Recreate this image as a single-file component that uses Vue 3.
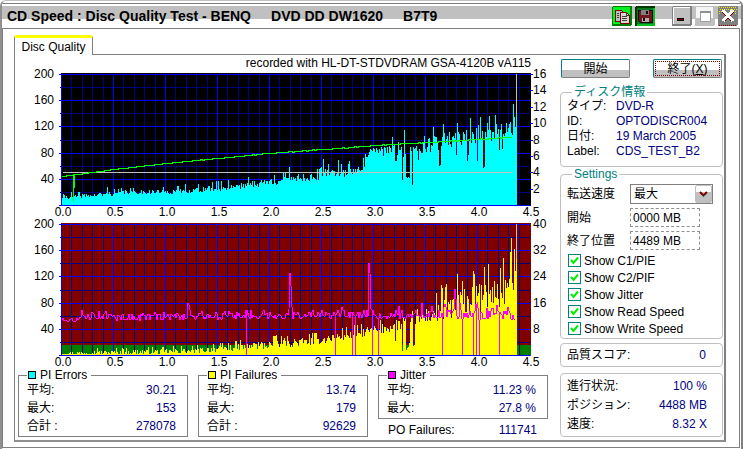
<script setup>
import { ref } from 'vue'

const LEFT = 43
const BASE = 136
const LAST = 498

// Repeatable noise so that the traces look the same on every load.
function noise(seed) {
  let s = seed
  return () => {
    s = (s * 1664525 + 1013904223) % 4294967296
    return s / 4294967296
  }
}

function interpolate(points, x) {
  for (let i = 1; i < points.length; i++) {
    const [x1, y1] = points[i]
    const [x0, y0] = points[i - 1]
    if (x <= x1) return y0 + ((y1 - y0) * (x - x0)) / (x1 - x0)
  }
  return points[points.length - 1][1]
}

function bars(envelope, spread, marks, seed) {
  const next = noise(seed)
  const heights = []
  for (let x = LEFT + 1; x <= LAST; x++) {
    const r = next()
    const shape = r > 0.92 ? 1.1 : r - 0.3
    heights.push(interpolate(envelope, x) + interpolate(spread, x) * shape)
  }
  for (const [x, h] of marks) heights[x - LEFT - 1] = h
  return heights
    .map((h, i) => `M${LEFT + 1 + i} ${BASE}v${-Math.max(1, Math.round(h))}h1v${Math.max(1, Math.round(h))}z`)
    .join('')
}

const errorBars = bars(
  [[44, 7], [60, 8], [79, 9], [107, 12], [147, 12], [179, 14], [212, 17], [245, 21], [271, 24], [274, 26], [300, 26], [307, 31], [330, 31], [346, 37], [349, 50], [380, 54], [410, 57], [430, 62], [450, 66], [470, 69], [492, 73], [498, 80]],
  [[44, 4], [125, 5], [230, 8], [320, 9], [348, 9], [375, 14], [430, 19], [498, 18]],
  [
    [53, 13], [89, 18], [167, 21], [210, 25], [256, 30], [271, 38], [305, 46], [320, 45], [331, 44],
    [377, 44], [378, 44], [384, 25], [385, 48], [386, 75], [388, 28], [389, 27], [390, 28], [391, 27],
    [394, 20], [400, 45], [406, 69], [421, 39], [422, 40], [438, 50], [440, 73], [439, 82], [449, 44], [450, 50],
    [459, 44], [465, 37], [466, 38], [460, 80], [469, 82], [474, 73], [478, 81], [481, 55], [484, 56], [488, 82], [495, 101], [496, 88], [497, 78], [498, 92]
  ],
  41
)

const failureBars = bars(
  [[44, 1], [120, 2], [175, 3], [200, 5], [225, 7], [255, 9], [272, 10], [305, 14], [339, 20], [372, 26], [390, 30], [405, 35], [425, 40], [440, 46], [460, 51], [475, 54], [490, 62], [498, 72]],
  [[44, 4], [200, 6], [260, 9], [300, 8], [360, 10], [400, 12], [430, 28], [498, 36]],
  [
    [79, 7], [105, 6], [163, 9], [195, 11], [210, 12], [236, 12], [258, 20], [266, 17],
    [377, 14], [378, 35], [384, 4], [385, 38], [388, 5], [389, 7], [390, 8], [391, 12], [395, 9], [396, 10],
    [423, 70], [427, 68], [439, 81], [444, 74], [456, 81], [470, 91], [482, 87], [493, 117], [494, 72], [496, 106], [497, 84], [498, 97]
  ],
  97
)

const jitterLine = (() => {
  const next = noise(18)
  const level = [[44, 101], [62, 101], [65, 98], [84, 97], [96, 99], [170, 98], [230, 97], [350, 97], [430, 96], [498, 97]]
  const marks = {
    64: 91, 170: 84, 171: 86, 172: 91, 245: 92, 271: 90, 272: 54, 273: 67, 274: 88, 324: 88, 351: 44, 352: 54, 353: 90,
    381: 87, 404: 84, 414: 87, 427: 85, 437: 70, 438: 80, 442: 84, 458: 85, 459: 83, 460: 89, 479: 86, 490: 88
  }
  const drops = [228, 317, 334, 337, 354, 360, 424, 444, 455, 458, 461, 481]
  let d = ''
  for (let x = LEFT + 1; x <= 497; x++) {
    const amp = x < 62 ? 3 : x > 410 ? 11 : 8
    const r = next()
    const y = marks[x] ?? Math.round(interpolate(level, x) + (r > 0.93 ? -0.7 : 0.4 - r) * amp)
    d += `${d ? 'L' : 'M'}${x} ${y}`
    if (drops.includes(x)) d += `L${x} ${BASE}L${x + 1} ${y}`
  }
  return d
})()

const speedLine = (() => {
  const curve = [[44, 107], [95, 100], [147, 94], [199, 89], [251, 84], [304, 80], [357, 76], [408, 73], [459, 70], [494, 68]]
  const next = noise(7)
  let d = 'M44 107'
  for (let x = 46; x <= 494; x += 2) {
    const y = Math.round(interpolate(curve, x) + (x > 180 ? (next() - 0.5) * 0.8 : 0))
    d += `H${x}V${y}`
  }
  return d
})()

const columns = Array.from({ length: 45 }, (_, i) => ({ x: Math.round(LEFT + i * 10.4), major: i % 5 === 0 }))
const rows = Array.from({ length: 11 }, (_, i) => ({ y: Math.round(5 + i * 13.1), major: i % 2 === 0 }))
const leftLabels = [200, 160, 120, 80, 40].map((v, i) => ({ v, y: Math.round(5 + i * 26.2) }))
const bottomLabels = Array.from({ length: 10 }, (_, i) => ({ v: (i / 2).toFixed(1), x: 45 + i * 52 }))
const scale = (values, step) => values.map((v, i) => ({ v, y: Math.round(5 + i * step) }))

const charts = [
  { id: 'errors', name: 'PI Errors', right: scale([16, 14, 12, 10, 8, 6, 4, 2], 16.4) },
  { id: 'failures', name: 'PI Failures', right: scale([40, 32, 24, 16, 8], 26.2) }
]

const stats = [
  { name: 'PI Errors', color: 'cyan', rows: [['平均:', '30.21'], ['最大:', '153'], ['合計 :', '278078']] },
  { name: 'PI Failures', color: 'yellow', rows: [['平均:', '13.74'], ['最大:', '179'], ['合計 :', '92629']] },
  { name: 'Jitter', color: 'magenta', rows: [['平均:', '11.23 %'], ['最大:', '27.8 %']] }
]

const discInfo = [['タイプ:', 'DVD-R'], ['ID:', 'OPTODISCR004'], ['日付:', '19 March 2005'], ['Label:', 'CDS_TEST_B2']]
const progress = [['進行状況:', '100 %'], ['ポジション:', '4488 MB'], ['速度:', '8.32 X']]

const speed = ref('最大')
const start = ref('0000 MB')
const end = ref('4489 MB')
const options = ref([
  { label: 'Show C1/PIE', on: true },
  { label: 'Show C2/PIF', on: true },
  { label: 'Show Jitter', on: true },
  { label: 'Show Read Speed', on: true },
  { label: 'Show Write Speed', on: true }
])
</script>

<template>
  <div class="window">
    <header class="titlebar">
      <h1 class="title"><span>CD Speed : Disc Quality Test - BENQ</span><span>DVD DD DW1620</span><span>B7T9</span></h1>
      <div class="tools">
        <button class="tool" aria-label="Copy">
          <svg viewBox="0 0 20 20" shape-rendering="crispEdges">
            <rect width="20" height="20" rx="2" fill="#008000" /><rect x="1" y="1" width="17" height="17" fill="#00f020" />
            <path d="M3 4h6l2 2v9H3z" fill="#c0c0c0" stroke="#800000" />
            <path d="M8 6h6l3 3v8H8z" fill="#d8d8d8" stroke="#800000" />
            <path d="M14 6v3h3M10 10h5M10 12h5M10 14h5M5 7h2M5 9h2M5 11h2" fill="none" stroke="#404040" />
          </svg>
        </button>
        <button class="tool" aria-label="Save">
          <svg viewBox="0 0 20 20" shape-rendering="crispEdges">
            <rect width="20" height="20" rx="2" fill="#003800" /><path d="M2 18h16V2h2v18H2z" fill="#00c020" />
            <rect x="2" y="2" width="16" height="16" fill="#087820" />
            <path d="M3 4h14v12H5l-2-2z" fill="#701820" stroke="#180808" />
            <path d="M6 4h8v5H6z" fill="#808080" /><path d="M7 12h7v4H7z" fill="#b0b0b0" /><path d="M8 12h2v3H8zM11 5h2v3h-2z" fill="#200000" />
          </svg>
        </button>
      </div>
      <div class="controls">
        <button class="tool" aria-label="Minimize">
          <svg viewBox="0 0 20 20" shape-rendering="crispEdges">
            <rect width="20" height="20" rx="2" fill="#808080" /><path d="M1 1h17v17H1z" fill="#c0c0c0" /><path d="M1 1h17v1H2v16H1z" fill="#fff" />
            <path d="M5 12h7v3H5z" fill="#000" /><path d="M6 13h5v1H6z" fill="#800000" />
          </svg>
        </button>
        <button class="tool" aria-label="Maximize">
          <svg viewBox="0 0 20 20" shape-rendering="crispEdges">
            <rect width="20" height="20" rx="2" fill="#c0c0c0" /><path d="M1 1h17v11H1z" fill="#f4f4f4" />
            <path d="M5 5h10v10H5z" fill="#fff" stroke="#a0a0a0" /><path d="M5 5h10v2H5z" fill="#909090" />
          </svg>
        </button>
        <button class="tool" aria-label="Close">
          <svg viewBox="0 0 20 20" shape-rendering="crispEdges">
            <rect width="20" height="20" rx="2" fill="#808080" />
            <path d="M1 1.500h18M2 3.500h17M1 5.500h4M15 5.500h4M1 7.500h2M17 7.500h2" stroke="#f0e800" stroke-dasharray="1 1" />
            <path d="M1 19.500h18" stroke="#800000" stroke-dasharray="1 1" />
            <path d="M5 5l10 10M15 5L5 15" stroke="#800000" stroke-width="4" /><path d="M5 4l10 11M15 4L5 15" stroke="#fff" stroke-width="3" />
          </svg>
        </button>
      </div>
    </header>

    <main class="client">
      <div class="tabs" role="tablist"><button class="tab" role="tab" aria-selected="true">Disc Quality</button></div>
      <section class="panel">
        <div class="left">
          <p class="caption">recorded with HL-DT-STDVDRAM GSA-4120B vA115</p>
          <svg v-for="chart in charts" :key="chart.id" class="chart" viewBox="0 0 530 150" role="img" :aria-label="chart.name">
            <g shape-rendering="crispEdges">
              <rect x="43" y="4" width="470" height="133" :class="'plot-' + chart.id" />
              <rect v-if="chart.id === 'failures'" x="43" y="126" width="470" height="11" fill="#008000" />
              <g v-for="major in [false, true]" :key="String(major)" :class="major ? 'major' : 'minor'">
                <template v-for="c in columns" :key="c.x"><rect v-if="c.major === major" :x="c.x" y="5" width="1" height="132" /></template>
                <template v-for="r in rows" :key="r.y"><rect v-if="r.major === major" :x="major ? 41 : 42" :y="r.y" :width="major ? 471 : 470" height="1" /></template>
              </g>
              <template v-if="chart.id === 'errors'"><rect v-for="r in chart.right" :key="r.v" x="512" :y="r.y" width="3" height="1" class="major" /></template>
              <path :d="chart.id === 'errors' ? errorBars : failureBars" :class="'bars-' + chart.id" />
              <template v-if="chart.id === 'errors'">
                <rect x="45" y="103" width="450" height="1" class="marker" />
                <rect x="498" y="5" width="1" height="40" class="marker" />
                <path :d="speedLine" class="line speed" />
                <rect x="56" y="105" width="1" height="14" class="dip" />
                <rect x="55" y="105" width="1" height="28" class="dip" />
              </template>
              <template v-else>
                <rect x="498" y="5" width="1" height="35" class="marker" />
                <path :d="jitterLine" class="line jitter" />
              </template>
            </g>
            <text v-for="l in leftLabels" :key="l.v" x="36" :y="l.y + 4" text-anchor="end">{{ l.v }}</text>
            <text v-for="l in chart.right" :key="l.v" x="515" :y="l.y + 4">{{ l.v }}</text>
            <text v-for="l in bottomLabels" :key="l.v" :x="l.x" y="147" text-anchor="middle">{{ l.v }}</text>
          </svg>
          <div class="stats">
            <div v-for="s in stats" :key="s.name" class="stat">
              <fieldset class="box">
                <legend><i class="swatch" :class="s.color"></i>{{ s.name }}</legend>
                <dl><div v-for="r in s.rows" :key="r[0]"><dt>{{ r[0] }}</dt><dd>{{ r[1] }}</dd></div></dl>
              </fieldset>
              <dl v-if="s.name === 'Jitter'" class="po"><div><dt>PO Failures:</dt><dd>111741</dd></div></dl>
            </div>
          </div>
        </div>

        <aside class="right">
          <div class="actions">
            <button class="action">開始</button>
            <button class="action focus">終了(<u>X</u>)</button>
          </div>
          <fieldset class="group info">
            <legend>ディスク情報</legend>
            <dl><div v-for="r in discInfo" :key="r[0]"><dt>{{ r[0] }}</dt><dd>{{ r[1] }}</dd></div></dl>
          </fieldset>
          <fieldset class="group settings">
            <legend>Settings</legend>
            <div class="fields">
              <label for="speed">転送速度</label>
              <div class="select">
                <select id="speed" v-model="speed"><option>最大</option></select>
                <span class="arrow"><svg viewBox="0 0 9 6"><path d="M1 1l3.500 3.500L8 1" fill="none" stroke="#800000" stroke-width="2" /><path d="M3 4l1.500 1.500L6 4" fill="none" stroke="#008080" /></svg></span>
              </div>
              <label for="start">開始</label><input id="start" v-model="start" class="text" type="text" />
              <label for="end">終了位置</label><input id="end" v-model="end" class="text" type="text" />
            </div>
            <div class="checks">
              <label v-for="o in options" :key="o.label" class="check">
                <input v-model="o.on" type="checkbox" />
                <svg class="tick" viewBox="0 0 13 13"><rect x="0.500" y="0.500" width="12" height="12" fill="#fff" stroke="#008080" /><path v-if="o.on" d="M3 6l2.500 3L10 3.500" fill="none" stroke="#00f000" stroke-width="2" /></svg>
                {{ o.label }}
              </label>
            </div>
          </fieldset>
          <dl class="group score"><div><dt>品質スコア:</dt><dd>0</dd></div></dl>
          <dl class="group progress"><div v-for="r in progress" :key="r[0]"><dt>{{ r[0] }}</dt><dd>{{ r[1] }}</dd></div></dl>
        </aside>
      </section>
    </main>
  </div>
</template>

<style>
body {
  margin: 0;
  background: #fff;
}
</style>

<style scoped>
* {
  box-sizing: border-box;
}
.window,
button,
input,
select {
  font-family: 'Liberation Sans', 'Noto Sans CJK JP', sans-serif;
  font-size: 12px;
  color: #000;
}
.window {
  display: flex;
  flex-direction: column;
  min-height: 100vh;
  border: 1px solid #c0c0c0;
  border-left: 2px solid #909090;
  border-right: 2px solid #808080;
  border-bottom: 1px solid #808080;
  border-radius: 6px 6px 0 0;
  background: #fff;
  line-height: 14px;
}
.titlebar {
  display: flex;
  align-items: center;
  gap: 22px;
  height: 27px;
  padding: 3px 3px 0 5px;
  background: linear-gradient(#fff 2px, #808080 2px 3px, #fff 3px 5px, #c0c0c0 5px 18px, #fff 18px);
  border-radius: 5px 5px 0 0;
}
.title {
  display: flex;
  flex: 1;
  gap: 20px;
  margin: 0;
  font-size: 14px;
  font-weight: bold;
  white-space: nowrap;
}
.tools,
.controls {
  display: flex;
  gap: 3px;
}
.tools {
  margin-right: -5px;
}
.tool {
  width: 20px;
  height: 20px;
  padding: 0;
  border: 0;
  background: none;
}
.tool svg {
  display: block;
}
.client {
  flex: 1;
  display: flex;
  flex-direction: column;
  margin: 0 1px 1px 0;
  padding: 6px 13px 5px 11px;
  border: 1px solid #808080;
}
.tabs {
  display: flex;
  height: 19px;
}
.tab {
  position: relative;
  width: 79px;
  height: 20px;
  padding: 0;
  border: 1px solid #808080;
  border-top: 3px solid #ff0;
  border-bottom: 0;
  border-radius: 3px 3px 0 0;
  background: #fff;
}
.panel {
  flex: 1;
  display: grid;
  grid-template-columns: minmax(0, 1fr) 163px;
  gap: 12px;
  padding: 3px 1px 3px 3px;
  border: 1px solid #808080;
  border-right-width: 2px;
  border-bottom: 2px solid #909090;
}
.caption {
  margin: 0;
  padding-right: 17px;
  line-height: 11px;
  text-align: right;
}
.chart {
  display: block;
  width: 100%;
  height: auto;
  overflow: visible;
}
.chart text {
  font-size: 12px;
}
.plot-errors {
  fill: #000;
}
.plot-failures {
  fill: #800000;
}
.minor {
  fill: #000080;
}
.major {
  fill: #00f;
}
.bars-errors {
  fill: #0ff;
}
.bars-failures {
  fill: #ff0;
}
.marker {
  fill: #c0c0c0;
}
.dip {
  fill: #0f0;
}
.line {
  fill: none;
}
.speed {
  stroke: #0f0;
}
.jitter {
  stroke: #f0f;
}
.stats {
  display: grid;
  grid-template-columns: repeat(3, 1fr);
  gap: 10px;
}
fieldset {
  min-width: 0;
  margin: 0;
  padding: 0;
}
.box {
  border: 1px solid #808080;
  padding: 0 11px 1px 8px;
}
.box legend {
  display: flex;
  align-items: center;
  gap: 4px;
  padding: 0 4px 0 1px;
  line-height: 12px;
}
.swatch {
  width: 8px;
  height: 8px;
  border: 1px solid #000;
}
.cyan {
  background: #0ff;
}
.yellow {
  background: #ff0;
}
.magenta {
  background: #f0f;
}
dl {
  margin: 0;
}
dl > div {
  display: flex;
  justify-content: space-between;
}
dd {
  margin: 0;
  color: #000080;
}
.box dl > div {
  line-height: 18px;
}
.po {
  padding: 4px 11px 0 10px;
}
.right {
  display: flex;
  flex-direction: column;
}
.actions {
  display: flex;
  justify-content: space-between;
  padding: 1px 1px 7px;
}
.action {
  width: 69px;
  height: 19px;
  padding: 0;
  border: 1px solid #008080;
  border-right-color: #808080;
  border-bottom-color: #808080;
  border-radius: 2px;
  background: linear-gradient(#fff 60%, #c0c0c0 60%);
  line-height: 14px;
}
.focus {
  outline: 1px dotted #800000;
  outline-offset: -3px;
}
.group {
  border: 1px solid #c0c0c0;
  border-radius: 4px;
}
.group legend {
  margin-left: 5px;
  padding: 0 2px;
  color: #008080;
}
.info {
  padding: 0 6px 7px;
}
.info dl > div {
  display: grid;
  grid-template-columns: 49px 1fr;
  line-height: 15px;
}
.settings {
  padding: 3px 6px 1px;
}
.fields {
  display: grid;
  grid-template-columns: 63px 1fr;
  align-items: center;
  row-gap: 4px;
}
.select {
  display: grid;
  width: 83px;
}
.select select {
  grid-area: 1 / 1;
  height: 20px;
  padding: 0 3px;
  border: 1px solid #808080;
  border-radius: 0;
  background: #fff;
  appearance: none;
}
.arrow {
  grid-area: 1 / 1;
  justify-self: end;
  align-self: center;
  display: grid;
  place-items: center;
  width: 17px;
  height: 18px;
  margin-right: 1px;
  border: 1px solid #c0c0c0;
  border-radius: 2px;
  background: linear-gradient(#fff 40%, #c0c0c0 40%);
  pointer-events: none;
}
.arrow svg {
  width: 9px;
}
.text {
  width: 70px;
  height: 19px;
  padding: 0 2px;
  border: 1px dashed #909090;
  background: #fff;
}
.checks {
  padding: 2px 0 0 1px;
}
.check {
  display: flex;
  align-items: center;
  gap: 3px;
  height: 17px;
}
.check input {
  width: 13px;
  height: 13px;
  margin: 0 -16px 0 0;
  opacity: 0;
}
.tick {
  width: 13px;
  height: 13px;
}
.score {
  margin: 4px 0 6px;
  padding: 4px 16px 4px 6px;
}
.progress {
  padding: 3px 15px 2px 6px;
  line-height: 19px;
}
</style>
